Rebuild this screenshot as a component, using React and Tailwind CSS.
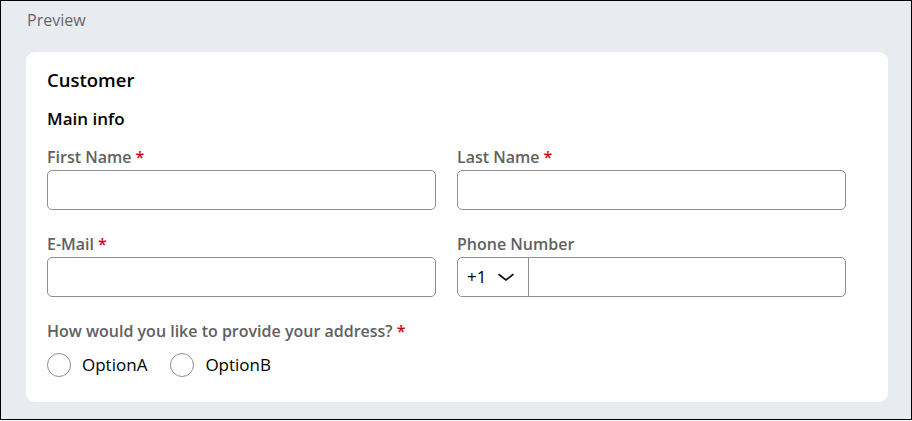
import React from 'react';

const font = { fontFamily: '"Open Sans", "Noto Sans", sans-serif' };

const Label = ({ children, required }) => (
  <label className="block h-5 text-[16px] leading-5 font-semibold text-[#616161] mb-[3px]">
    {children}
    {required && <span className="text-[#d0021b] ml-1">*</span>}
  </label>
);

const TextField = ({ label, required }) => (
  <div>
    <Label required={required}>{label}</Label>
    <input
      type="text"
      className="block w-full h-10 rounded-[5px] border border-[#8f8f8f] bg-white px-3 text-[16px] outline-none"
    />
  </div>
);

const PhoneField = () => (
  <div>
    <Label>Phone Number</Label>
    <div className="flex h-10 rounded-[5px] border border-[#8f8f8f] bg-white">
      <div className="flex w-[71px] items-center border-r border-[#8f8f8f] pl-[9px] text-[17px] text-black">
        <span>+1</span>
        <svg className="ml-[11px]" width="18" height="10" viewBox="0 0 18 10" fill="none">
          <path d="M2 2.5 L9 8 L16 2.5" stroke="#111" strokeWidth="1.6" strokeLinecap="round" strokeLinejoin="round" />
        </svg>
      </div>
      <input type="text" className="flex-1 min-w-0 px-3 outline-none rounded-r-[5px]" />
    </div>
  </div>
);

const Radio = ({ label }) => (
  <label className="flex items-center gap-[11px] cursor-pointer">
    <span className="block w-6 h-6 rounded-full border border-[#8f8f8f] bg-white" />
    <span className="text-[17px] leading-6 text-black">{label}</span>
  </label>
);

export default function App() {
  return (
    <div style={font} className="w-[912px] h-[420px] border border-black bg-[#e8ecf0]">
      <div className="px-[26px] pt-2 h-[51px] text-[16px] leading-[22px] text-[#666]">Preview</div>
      <div className="ml-[25px] w-[862px] h-[350px] rounded-[9px] bg-white pl-[21px] pt-[16px]">
        <h2 className="text-[18.5px] leading-6 font-semibold text-black">Customer</h2>
        <h3 className="mt-[16px] text-[17px] leading-[22px] font-semibold text-black">Main info</h3>
        <div className="mt-[17px] w-[799px] grid grid-cols-2 gap-x-[21px] gap-y-6">
          <TextField label="First Name" required />
          <TextField label="Last Name" required />
          <TextField label="E-Mail" required />
          <PhoneField />
        </div>
        <div className="mt-6">
          <Label required>How would you like to provide your address?</Label>
          <div className="mt-3 flex items-center gap-[23px]">
            <Radio label="OptionA" />
            <Radio label="OptionB" />
          </div>
        </div>
      </div>
    </div>
  );
}
